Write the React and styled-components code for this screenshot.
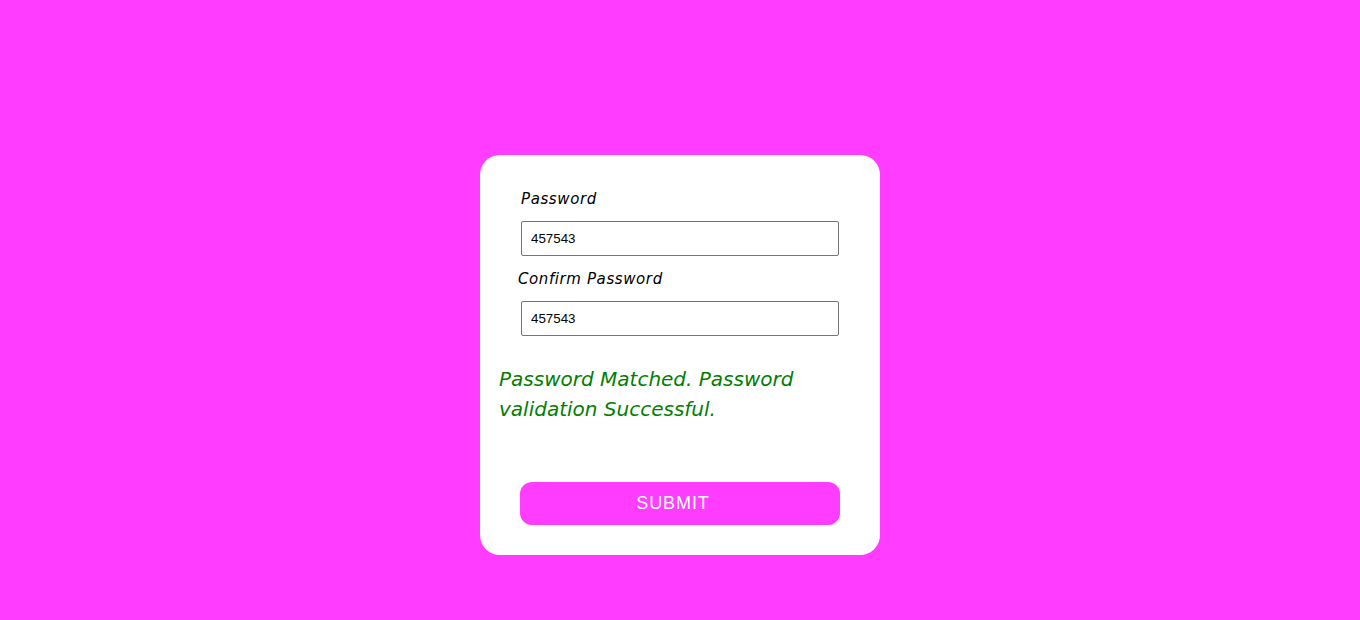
import React, { useState } from "react";
import styled, { createGlobalStyle } from "styled-components";

const GlobalStyle = createGlobalStyle`
  html, body {
    margin: 0;
    padding: 0;
    background-color: #ff3cff;
  }
`;

const Page = styled.div`
  min-height: 620px;
  display: flex;
  justify-content: center;
  align-items: flex-start;
  padding-top: 155px;
  box-sizing: border-box;
  background-color: #ff3cff;
`;

const Card = styled.form`
  width: 400px;
  height: 400px;
  box-sizing: border-box;
  background-color: #fff;
  border-radius: 20px;
  padding: 34px 19px 0 19px;
  display: flex;
  flex-direction: column;
`;

const Field = styled.div`
  display: flex;
  flex-direction: column;
  margin-left: ${(p) => p.$indent}px;
  margin-top: ${(p) => p.$top}px;
`;

const Label = styled.label`
  font-family: "DejaVu Sans", sans-serif;
  font-style: italic;
  font-size: 15px;
  letter-spacing: 0.6px;
  line-height: 20px;
  color: #000;
`;

const Input = styled.input`
  width: 318px;
  height: 35px;
  box-sizing: border-box;
  margin-top: 12px;
  margin-left: ${(p) => p.$shift || 0}px;
  padding: 0 9px;
  border: 1px solid #767676;
  border-radius: 2px;
  font-family: "Liberation Sans", Arial, sans-serif;
  font-size: 13.33px;
  color: #000;
  outline: none;
`;

const Message = styled.p`
  margin: 28px 0 0 0;
  width: 330px;
  font-family: "DejaVu Sans", sans-serif;
  font-style: italic;
  font-size: 20px;
  line-height: 30px;
  color: #008000;
`;

const Button = styled.button`
  width: 320px;
  height: 43px;
  margin: 58px 0 0 21px;
  padding: 0 14px 0 0;
  border: none;
  border-radius: 12px;
  background-color: #ff3cff;
  color: #fff;
  font-family: "Liberation Sans", Arial, sans-serif;
  font-size: 18px;
  letter-spacing: 0.9px;
  cursor: pointer;
`;

const App = () => {
  const [password, setPassword] = useState("457543");
  const [confirm, setConfirm] = useState("457543");
  const matched = password === confirm;

  return (
    <>
      <GlobalStyle />
      <Page>
        <Card onSubmit={(e) => e.preventDefault()}>
          <Field $indent={22} $top={0}>
            <Label>Password</Label>
            <Input
              type="text"
              value={password}
              onChange={(e) => setPassword(e.target.value)}
            />
          </Field>
          <Field $indent={19} $top={13}>
            <Label>Confirm Password</Label>
            <Input
              $shift={3}
              type="text"
              value={confirm}
              onChange={(e) => setConfirm(e.target.value)}
            />
          </Field>
          <Message>
            {matched
              ? "Password Matched. Password validation Successful."
              : "Password did not match."}
          </Message>
          <Button type="submit">SUBMIT</Button>
        </Card>
      </Page>
    </>
  );
};

export default App;
